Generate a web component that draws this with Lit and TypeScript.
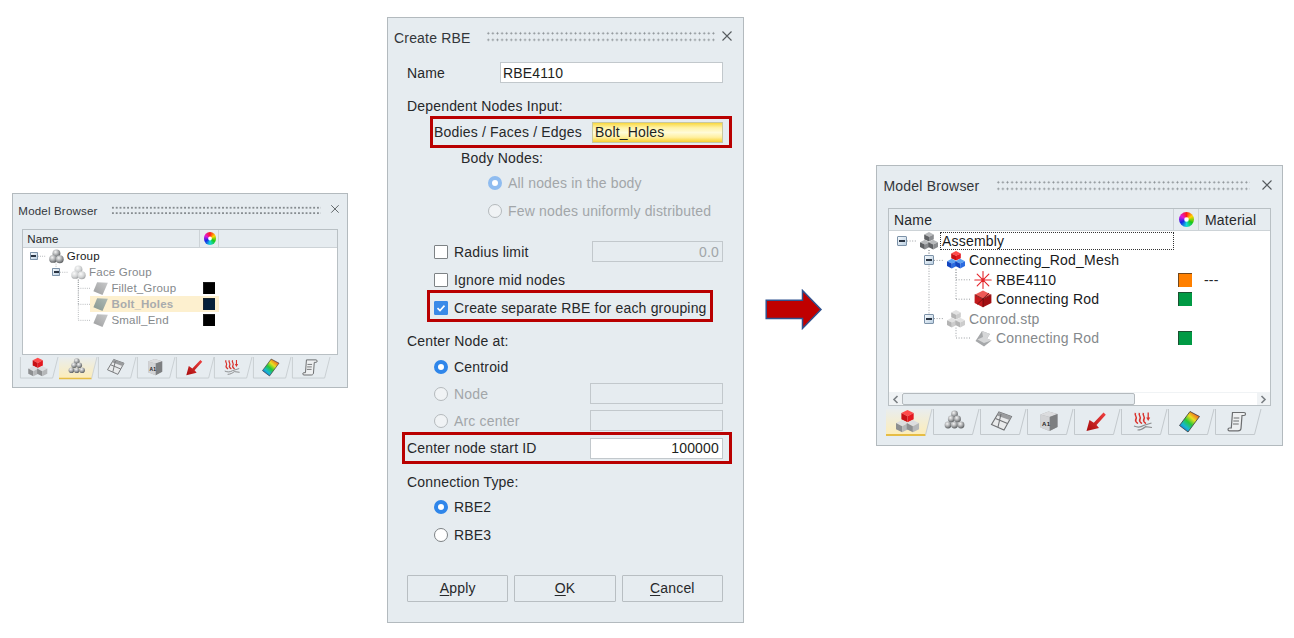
import { LitElement, html, css, svg, nothing } from "lit";
import { customElement, property } from "lit/decorators.js";

type IconName = "asm" | "mesh" | "asmLight" | "star" | "redCube" | "rod" | "group" | "groupLight" | "face" | "faceHi";
interface Row { level: number; exp?: boolean; icon: IconName; label: string; dim?: boolean; bold?: boolean; swatch?: string; extra?: string; focus?: boolean; hi?: boolean; }

const ROW_H = 19.4;

const cube = (cx: number, ty: number, r: number, top: string, left: string, right: string) => svg`
  <path d="M${cx} ${ty}L${cx + r} ${ty + r * 0.5}L${cx} ${ty + r}L${cx - r} ${ty + r * 0.5}Z" fill=${top} />
  <path d="M${cx - r} ${ty + r * 0.5}L${cx} ${ty + r}V${ty + 2 * r}L${cx - r} ${ty + 1.5 * r}Z" fill=${left} />
  <path d="M${cx + r} ${ty + r * 0.5}L${cx} ${ty + r}V${ty + 2 * r}L${cx + r} ${ty + 1.5 * r}Z" fill=${right} />`;

const trio = (a: string[], b: string[]) => svg`
  ${cube(9, 0, 4.8, a[0], a[1], a[2])}
  ${cube(4.8, 7.8, 4.8, b[0], b[1], b[2])}
  ${cube(13.2, 7.8, 4.8, b[0], b[1], b[2])}`;

const GREY = ["#b8babc", "#5f6164", "#8a8c8f"];
const LIGHT = ["#dcdddf", "#8d8f91", "#b5b7b9"];
const PALE = ["#e2e2e2", "#b4b4b4", "#cccccc"];
const RED = ["#ff4a4a", "#c80f14", "#e4181f"];
const BLUE = ["#5aa0f2", "#1245c0", "#2a6be0"];

const sphereDefs = svg`<defs>
  <radialGradient id="sph" cx="38%" cy="32%" r="75%"><stop offset="0" stop-color="#f4f4f4"/><stop offset=".5" stop-color="#a8aaac"/><stop offset="1" stop-color="#4f5254"/></radialGradient>
  <radialGradient id="sphl" cx="38%" cy="32%" r="75%"><stop offset="0" stop-color="#fafafa"/><stop offset=".6" stop-color="#d0d2d3"/><stop offset="1" stop-color="#989a9c"/></radialGradient>
</defs>`;
const ball = (x: number, y: number, r: number, id = "sph") => svg`<circle cx=${x} cy=${y} r=${r} fill="url(#${id})" />`;

const treeIcon = (n: IconName) => {
  switch (n) {
    case "asm": return trio(GREY, GREY);
    case "asmLight": return trio(PALE, PALE);
    case "mesh": return trio(RED, BLUE);
    case "star": return svg`<g stroke="#e4252a" stroke-width="1.1" stroke-linecap="round">
      <path d="M9 .5V17.5M.8 9H17.2M3.2 3.2L14.8 14.8M14.8 3.2L3.2 14.8" /></g><circle cx="9" cy="9" r="1.5" fill="#e4252a"/>`;
    case "redCube": return svg`${cube(9, 0.5, 8.4, "#ee5a56", "#c3191c", "#a20f12")}
      <path d="M.8 4.7L9 8.9L17.2 4.7M9 8.9V17.2M3 14.5L15 3" stroke="#5a0a0a" stroke-width=".7" fill="none"/>`;
    case "rod": return svg`<path d="M1.5 12L8 2L16 5L13 9.5L17.5 11.5L10 17.5Z" fill="#a6a8aa"/><path d="M8 2L16 5L13 9.5L9 8ZM3.5 10.5L9 8L13 9.5L17.5 11.5L10 14Z" fill="#d6d7d8"/>`;
    case "group": return svg`${sphereDefs}${ball(9, 5.3, 4.8)}${ball(5, 12, 4.8)}${ball(13, 12.5, 4.8)}`;
    case "groupLight": return svg`${sphereDefs}${ball(9, 5.3, 4.8, "sphl")}${ball(5, 12, 4.8, "sphl")}${ball(13, 12.5, 4.8, "sphl")}`;
    case "face": return svg`<defs><linearGradient id="fc" x1="0" y1="1" x2="1" y2="0"><stop offset="0" stop-color="#9c9d9e"/><stop offset="1" stop-color="#c9cacb"/></linearGradient></defs><path d="M5 1.5L18 2L11.5 17L.5 12.5Z" fill="url(#fc)"/>`;
    case "faceHi": return svg`<defs><linearGradient id="fh" x1="0" y1="1" x2="1" y2="0"><stop offset="0" stop-color="#87968f"/><stop offset="1" stop-color="#aebab5"/></linearGradient></defs><path d="M5 1.5L18 2L11.5 17L.5 12.5Z" fill="url(#fh)"/>`;
  }
};

const tabIcons = [
  svg`<g transform="translate(-.5 -.5) scale(1.28)">${trio(RED, LIGHT)}</g>`,
  svg`${sphereDefs}${ball(11, 3.5, 3.4)}${ball(7.8, 8.5, 3.4)}${ball(14, 8.5, 3.4)}${ball(4.5, 14.5, 3.4)}${ball(11, 14.5, 3.4)}${ball(17.5, 14.5, 3.4)}`,
  svg`<path d="M8.5 1.5L21 6L13.5 19.5L1 14Z" fill="#e8eaeb" stroke="#6f7173" stroke-width="1.1"/>
      <path d="M8.5 1.5L21 6L19 9.5L6.5 5Z" fill="#9a9c9e"/>
      <path d="M5 8L17 13M10.5 3.5L7.5 16.5" stroke="#6f7173" stroke-width="1.1" fill="none"/>`,
  svg`<path d="M3 4L11 1L20 3.5V16.5L12 20.5L3 17Z" fill="#a8aaac"/><path d="M3 4L11 1L20 3.5L12 6.5Z" fill="#dcdddf"/>
      <path d="M12 6.5L20 3.5V16.5L12 20.5Z" fill="#7d7f81"/><path d="M3 4L12 6.5V20.5L3 17Z" fill="#d2d3d5"/>
      <text x="4.6" y="15" class="mini">A1</text>`,
  svg`<defs><linearGradient id="ar" x1="0" y1="1" x2="1" y2="0"><stop offset="0" stop-color="#a80d0d"/><stop offset="1" stop-color="#f04040"/></linearGradient></defs>
      <path d="M2 20.5L5 9.5L9.3 12.3L19 2L21.3 4.3L12 14.4L14.5 17.5Z" fill="url(#ar)"/>`,
  svg`<g fill="none" stroke="#d9322c" stroke-width="1.5"><path d="M4 2.5C2.5 5 6 6 4.5 8.5S5 12 6.5 13"/><path d="M8 2.5C6.5 5 10 6 8.5 8.5S9 12 10.5 13"/><path d="M12 2.5C10.5 5 14 6 12.5 8.5S13 12 14.5 13"/></g>
      <path d="M16.7 2V7.5" stroke="#d9322c" stroke-width="1.3"/><path d="M14.7 7L16.7 10.5L18.7 7Z" fill="#d9322c"/>
      <path d="M2.5 15.5C6 17 9 17 12 15L20 12.5M6 19.5C9 19.5 12 18 14 16.2L20.5 17" fill="none" stroke="#8c8e90" stroke-width="1.2"/>`,
  svg`<defs><linearGradient id="rb" x1="0" y1="1" x2=".85" y2="0"><stop offset="0" stop-color="#1238d8"/><stop offset=".3" stop-color="#18b8d0"/><stop offset=".5" stop-color="#28c838"/><stop offset=".7" stop-color="#e8e020"/><stop offset=".87" stop-color="#f08020"/><stop offset="1" stop-color="#e82828"/></linearGradient></defs>
      <path d="M11.5 1L21 6L9.5 21.5L1 15Z" fill="url(#rb)" stroke="#3a3a3a" stroke-width=".8"/>`,
  svg`<path d="M7 2H18.5C20.5 2 20.5 5 18.5 5H16.5L15.5 18C15.3 20 13.8 20.3 12.5 20.3H4C2 20.3 2 17.5 4 17.5H5.8Z" fill="#eef0f1" stroke="#6c6e70" stroke-width="1.2"/>
      <path d="M8.2 7.5H13.8M7.8 10.5H13.5M7.5 13.5H13.2" stroke="#6c6e70" stroke-width="1.1"/>`,
];

@customElement("model-browser")
class ModelBrowser extends LitElement {
  @property({ attribute: false }) rows: Row[] = [];
  @property({ type: Number }) nameWidth = 285;
  @property({ type: Number }) colWidth = 25;
  @property({ type: Number }) activeTab = 0;
  @property() lastHeader = "";
  @property({ type: Boolean }) scroll = false;

  static styles = css`
    :host { display: block; box-sizing: border-box; border: 1px solid #b3babe; background: #e6ecf0; font: 14px "Liberation Sans", Arial, sans-serif; letter-spacing: .2px; color: #26282a; }
    .win { display: flex; flex-direction: column; height: 100%; }
    .bar { display: flex; align-items: center; height: 42px; flex: none; padding: 0 9px 0 6.5px; box-sizing: border-box; }
    .title { width: 112.5px; flex: none; margin-top: -2px; color: #33363a; }
    .grip { flex: none; width: 254px; height: 13px; margin-top: -3px; background: radial-gradient(circle at center, #868c90 .8px, transparent 1.15px) 0 0 / 4.6px 6.6px; }
    .close { width: 12px; height: 12px; margin-left: 11px; margin-top: -5px; flex: none; }
    .table { flex: 1; min-height: 0; margin: 0 11px; border: 1.5px solid #b9c0c4; border-top-width: 1px; background: #fff; display: flex; flex-direction: column; box-sizing: border-box; }
    .head { display: flex; height: 22.4px; flex: none; background: #e6ecf0; border-bottom: 1px solid #cdd3d7; box-sizing: border-box; }
    .hcell { display: flex; align-items: center; border-right: 1px solid #cdd3d7; box-sizing: border-box; padding-left: 5px; padding-top: 1px; }
    .hcell.wheel { padding: 0 0 0 5px; }
    .hcell.last { flex: 1; border: none; padding-left: 6px; }
    .wh { width: 15px; height: 15px; border-radius: 50%; background: radial-gradient(circle, #fff 0 1.5px, transparent 3px), conic-gradient(#ff1a1a, #ffd500, #18c818, #15d8d8, #1428e8, #e018d8, #ff1a1a); }
    .tree { flex: 1; min-height: 0; position: relative; overflow: hidden; }
    .lines { position: absolute; left: 0; top: 0; width: 100%; height: 130px; pointer-events: none; }
    .row { position: relative; display: flex; align-items: center; height: ${ROW_H}px; white-space: nowrap; }
    .indent { flex: none; box-sizing: border-box; height: 100%; display: flex; align-items: center; }
    .exp { width: 10px; height: 10px; box-sizing: border-box; border: 1px solid #7c92a8; border-radius: 1px; background: linear-gradient(135deg, #f6fafd, #bcd0e2); display: flex; align-items: center; justify-content: center; }
    .exp i { display: block; width: 6px; height: 2px; background: #2a3442; }
    .body { flex: none; display: flex; align-items: center; height: 100%; }
    .body.hi { background: #fdf0cf; }
    .ic { width: 18px; height: 18px; flex: none; margin-left: 4px; }
    .label { margin-left: 2px; padding-left: 2px; height: 18px; line-height: 18px; color: #17191b; box-sizing: border-box; flex: none; }
    .label.dim { color: #85898c; }
    .label.bold { font-weight: bold; color: #a9abad; }
    .label.focus { outline: 1px dotted #333; outline-offset: -1px; }
    .swcell { flex: none; padding-left: 4px; box-sizing: border-box; display: flex; align-items: center; }
    .sw { width: 14px; height: 14px; box-sizing: border-box; border-top: 1px solid rgba(40,40,40,.65); border-left: 1px solid rgba(40,40,40,.65); }
    .extra { margin-left: 5px; }
    .sb { flex: none; height: 13px; display: flex; align-items: stretch; background: #fff; border-top: 1px solid #f0f3f5; box-sizing: border-box; }
    .sb .arrow { width: 13px; flex: none; background: #f0f3f5; display: flex; align-items: center; justify-content: center; }
    .sb .thumb { width: 233px; flex: none; background: #e6ecf0; border: 1px solid #b4babe; border-radius: 2px; box-sizing: border-box; }
    .sb .rest { flex: 1; }
    .tabs { flex: none; display: flex; height: 27px; margin: 3px 0 9px 9px; }
    .tab { width: 47px; height: 27px; flex: none; overflow: visible; }
    .mini { font: bold 6px "Liberation Sans", Arial, sans-serif; fill: #222; }
  `;

  private linesSvg() {
    const y = (i: number) => 10 + ROW_H * i;
    const seg: string[] = [];
    this.rows.forEach((r, i) => {
      if (r.exp) seg.push(`M${18 + 27 * r.level} ${y(i)}H${28 + 27 * r.level}`);
      if (r.level === 0) return;
      const x = 13 + 27 * r.level;
      if (!r.exp) seg.push(`M${x} ${y(i)}H${x + 15}`);
      let p = i - 1;
      while (p >= 0 && this.rows[p].level >= r.level) p--;
      seg.push(`M${x} ${y(p) + 9}V${y(i)}`);
    });
    return html`<svg class="lines"><path d=${seg.join("")} fill="none" stroke="#9a9ea2" stroke-dasharray="1 1.6" /></svg>`;
  }

  private renderRow(r: Row) {
    const ind = 8 + 27 * r.level;
    const iw = ind + 19;
    const bodyW = this.nameWidth + this.colWidth - iw;
    const labelW = `width:${this.nameWidth - iw - 24}px`;
    return html`<div class="row">
      <div class="indent" style="width:${iw}px;padding-left:${ind}px">${r.exp ? html`<div class="exp"><i></i></div>` : nothing}</div>
      <div class="body ${r.hi ? "hi" : ""}" style="width:${bodyW}px">
        <svg class="ic" viewBox="0 0 18 18">${treeIcon(r.icon)}</svg>
        <div class="label ${r.dim ? "dim" : ""} ${r.bold ? "bold" : ""} ${r.focus ? "focus" : ""}" style=${labelW}>${r.label}</div>
        ${r.swatch ? html`<div class="swcell"><div class="sw" style="background:${r.swatch}"></div></div>` : nothing}
      </div>
      ${r.extra ? html`<div class="extra">${r.extra}</div>` : nothing}
    </div>`;
  }

  render() {
    return html`<div class="win">
      <div class="bar">
        <div class="title">Model Browser</div>
        <div class="grip"></div>
        <svg class="close" viewBox="0 0 12 12"><path d="M1.5 1.5L10.5 10.5M10.5 1.5L1.5 10.5" stroke="#555a5e" stroke-width="1.1"/></svg>
      </div>
      <div class="table">
        <div class="head">
          <div class="hcell" style="width:${this.nameWidth}px">Name</div>
          <div class="hcell wheel" style="width:${this.colWidth}px"><div class="wh"></div></div>
          <div class="hcell last">${this.lastHeader}</div>
        </div>
        <div class="tree">
          ${this.linesSvg()}
          ${this.rows.map((r) => this.renderRow(r))}
        </div>
        ${this.scroll ? html`<div class="sb">
          <div class="arrow"><svg width="7" height="9" viewBox="0 0 7 9"><path d="M5.5 1L2 4.5L5.5 8" fill="none" stroke="#7a7f83" stroke-width="1.6"/></svg></div>
          <div class="thumb"></div><div class="rest"></div>
          <div class="arrow"><svg width="7" height="9" viewBox="0 0 7 9"><path d="M1.5 1L5 4.5L1.5 8" fill="none" stroke="#7a7f83" stroke-width="1.6"/></svg></div>
        </div>` : nothing}
      </div>
      <div class="tabs">
        ${tabIcons.map((ic, i) => html`<svg class="tab" viewBox="0 0 47 27">
          <defs><linearGradient id="act" x1="0" y1="0" x2="0" y2="1"><stop offset="0" stop-color="#e9edee"/><stop offset="1" stop-color="#fdedb8"/></linearGradient></defs>
          ${i === this.activeTab
            ? svg`<path d="M0 0V26H39.5L46 0Z" fill="url(#act)"/><path d="M0 26H39.5" stroke="#e6bd45" stroke-width="2"/><path d="M39.5 26L46 0" stroke="#c8ced2" fill="none"/>`
            : svg`<path d="M.5 0V25.5H39.5L46 0" fill="none" stroke="#c3c9cd"/>`}
          <g transform="translate(10.5 1.5)">${ic}</g>
        </svg>`)}
      </div>
    </div>`;
  }
}

const leftRows: Row[] = [
  { level: 0, exp: true, icon: "group", label: "Group" },
  { level: 1, exp: true, icon: "groupLight", label: "Face Group", dim: true },
  { level: 2, icon: "face", label: "Fillet_Group", dim: true, swatch: "#000" },
  { level: 2, icon: "faceHi", label: "Bolt_Holes", bold: true, swatch: "#06203a", hi: true },
  { level: 2, icon: "face", label: "Small_End", dim: true, swatch: "#000" },
];
const rightRows: Row[] = [
  { level: 0, exp: true, icon: "asm", label: "Assembly", focus: true },
  { level: 1, exp: true, icon: "mesh", label: "Connecting_Rod_Mesh" },
  { level: 2, icon: "star", label: "RBE4110", swatch: "#ff8000", extra: "---" },
  { level: 2, icon: "redCube", label: "Connecting Rod", swatch: "#009a44" },
  { level: 1, exp: true, icon: "asmLight", label: "Conrod.stp", dim: true },
  { level: 2, icon: "rod", label: "Connecting Rod", dim: true, swatch: "#009a44" },
];

@customElement("app-root")
class AppRoot extends LitElement {
  static styles = css`
    :host { display: block; position: relative; width: 1294px; height: 638px; background: #fff; overflow: hidden; font: 14px "Liberation Sans", Arial, sans-serif; letter-spacing: .18px; color: #26282a; }
    .place { position: absolute; }
    .p-left { left: 12px; top: 193px; }
    .p-left model-browser { zoom: .826; width: 407px; height: 236px; }
    .p-right { left: 876px; top: 165px; }
    .p-right model-browser { width: 407px; height: 281px; }
    .p-arrow { left: 765px; top: 289px; }
    .p-dialog { left: 387px; top: 17px; width: 357px; height: 606px; box-sizing: border-box; border: 1px solid #b3babe; background: #e6ecf0; padding: 0 20px 0 19px; }

    .dbar { display: flex; align-items: center; height: 40px; margin: 0 -19px 0 -13px; }
    .dtitle { width: 92px; flex: none; color: #33363a; }
    .dgrip { width: 229px; flex: none; height: 13px; margin-top: -4px; background: radial-gradient(circle at center, #868c90 .8px, transparent 1.15px) 0 0 / 4.6px 6.6px; }
    .dclose { width: 12px; height: 12px; margin-left: 6px; margin-top: -4px; flex: none; }

    .r { display: flex; align-items: center; height: 20px; white-space: nowrap; }
    .tall { height: 21px; }
    .sub1 { padding-left: 27px; }
    .sub2 { padding-left: 54px; }
    .sub3 { padding-left: 81px; }
    .m4 { margin-top: 4px; } .m5 { margin-top: 5px; } .m6 { margin-top: 6px; } .m8 { margin-top: 8px; } .m9 { margin-top: 9px; } .m13 { margin-top: 13px; } .m20 { margin-top: 20px; } .m1 { margin-top: 1px; }
    .grey { color: #a2a6a9; }
    .spread { justify-content: space-between; }

    .in { box-sizing: border-box; height: 21px; border: 1px solid #c2c8cc; background: #fff; display: flex; align-items: center; padding: 0 2px; color: #1d1f21; }
    .w223 { width: 223px; }
    .w131 { width: 131px; }
    .w133 { width: 133px; }
    .in.off { background: #e6ecf0; color: #a2a6a9; justify-content: flex-end; padding-right: 3px; }
    .in.num { justify-content: flex-end; padding-right: 3px; }
    .in.sel { background: linear-gradient(#f9d840 0, #fff3a8 25%, #fffbd8 50%, #fff0a0 75%, #f8d030 100%); border-color: #c8c8a0; }

    .red { box-sizing: border-box; height: 32px; border: 3px solid #b90000; display: flex; align-items: center; white-space: nowrap; }
    .red1 { margin: 0 -9px 0 23px; padding: 0 6px 0 1px; justify-content: space-between; }
    .red2 { margin-left: 20px; width: 286px; padding: 3px 0 0 4px; }
    .red3 { margin: 1px -9px 0 -5px; padding: 0 6px 0 2px; justify-content: space-between; }

    .box { width: 14px; height: 14px; box-sizing: border-box; border: 1px solid #7d8285; background: #fff; border-radius: 1px; flex: none; margin-right: 6px; }
    .box.on { background: #3a8ae8; border-color: #3a8ae8; display: flex; align-items: center; justify-content: center; }
    .radio { width: 14px; height: 14px; box-sizing: border-box; border-radius: 50%; border: 1px solid #7d8285; background: #fff; flex: none; margin-right: 6px; }
    .radio.on { border: 4px solid #2f86ea; }
    .radio.offon { border: 4px solid #8fbcf0; }
    .radio.dis { border-color: #b4b9bc; background: #f0f3f5; }

    .btns { display: flex; gap: 6px; margin-top: 30px; }
    .btn { flex: 1; height: 27px; box-sizing: border-box; border: 1px solid #b8bec2; border-radius: 1px; padding-bottom: 1px; display: flex; align-items: center; justify-content: center; white-space: pre; }
    .btn u { text-underline-offset: 2px; }
  `;

  render() {
    return html`
      <div class="place p-left"><model-browser .rows=${leftRows} .nameWidth=${214} .colWidth=${23} .activeTab=${1}></model-browser></div>

      <svg class="place p-arrow" width="58" height="42" viewBox="0 0 58 42">
        <path d="M1.2 11.3H37.5V1.5L56 20.5L37.5 39.5V29.5H1.2Z" fill="#c00000" stroke="#2f528f" stroke-width="1.5"/>
      </svg>

      <div class="place p-dialog">
        <div class="dbar">
          <div class="dtitle">Create RBE</div>
          <div class="dgrip"></div>
          <svg class="dclose" viewBox="0 0 12 12"><path d="M1.5 1.5L10.5 10.5M10.5 1.5L1.5 10.5" stroke="#555a5e" stroke-width="1.1"/></svg>
        </div>
        <div class="r tall m4 spread"><span>Name</span><div class="in w223">RBE4110</div></div>
        <div class="r m13">Dependent Nodes Input:</div>
        <div class="red red1"><span>Bodies / Faces / Edges</span><div class="in w131 sel">Bolt_Holes</div></div>
        <div class="r sub2">Body Nodes:</div>
        <div class="r m5 sub3 grey"><div class="radio offon"></div>All nodes in the body</div>
        <div class="r m8 sub3 grey"><div class="radio dis"></div>Few nodes uniformly distributed</div>
        <div class="r tall m20 sub1 spread"><span class="r"><div class="box"></div>Radius limit</span><div class="in off w131">0.0</div></div>
        <div class="r m8 sub1"><div class="box"></div>Ignore mid nodes</div>
        <div class="red red2"><div class="box on"><svg width="10" height="10" viewBox="0 0 10 10"><path d="M1.5 5.2L4 7.6L8.5 2.6" fill="none" stroke="#fff" stroke-width="1.6"/></svg></div>Create separate RBE for each grouping</div>
        <div class="r m9">Center Node at:</div>
        <div class="r m6 sub1"><div class="radio on"></div>Centroid</div>
        <div class="r tall m6 sub1 spread grey"><span class="r"><div class="radio dis"></div>Node</span><div class="in off w133"></div></div>
        <div class="r tall m6 sub1 spread grey"><span class="r"><div class="radio dis"></div>Arc center</span><div class="in off w133"></div></div>
        <div class="red red3"><span>Center node start ID</span><div class="in num w133">100000</div></div>
        <div class="r m8">Connection Type:</div>
        <div class="r m5 sub1"><div class="radio on"></div>RBE2</div>
        <div class="r m8 sub1"><div class="radio"></div>RBE3</div>
        <div class="btns">
          <div class="btn"><span><u>A</u>pply</span></div>
          <div class="btn"><span><u>O</u>K</span></div>
          <div class="btn"><span><u>C</u>ancel</span></div>
        </div>
      </div>

      <div class="place p-right"><model-browser .rows=${rightRows} .nameWidth=${285} .colWidth=${25} .activeTab=${0} lastHeader="Material" scroll></model-browser></div>
    `;
  }
}
